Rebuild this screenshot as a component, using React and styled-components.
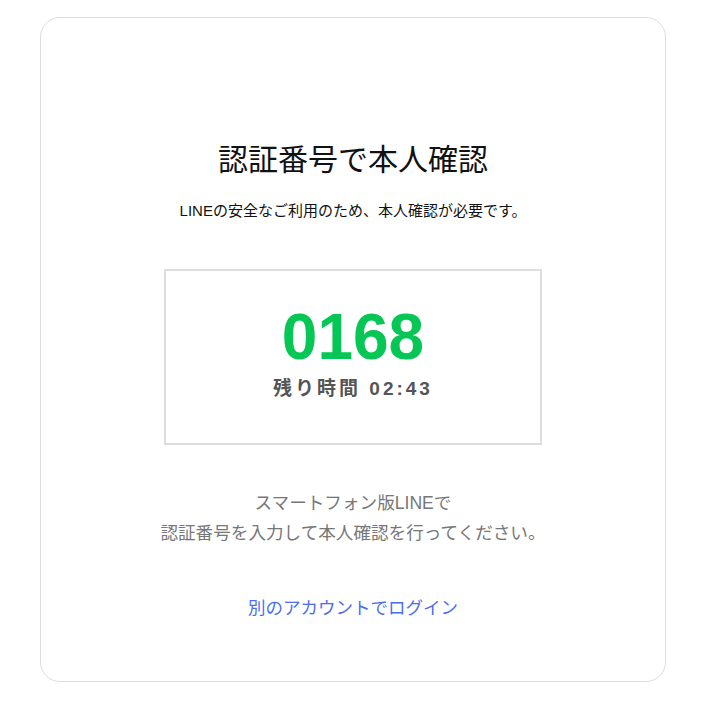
import React from 'react';
import styled, { createGlobalStyle } from 'styled-components';

const GlobalStyle = createGlobalStyle`
  html, body {
    margin: 0;
    padding: 0;
    background: #ffffff;
  }
  body {
    font-family: "Liberation Sans", "Noto Sans CJK JP", sans-serif;
    color: #111111;
  }
`;

const Page = styled.div`
  padding-top: 17px;
  padding-left: 40px;
`;

const Card = styled.div`
  box-sizing: border-box;
  width: 626px;
  height: 665px;
  border: 1px solid #dddddd;
  border-radius: 20px;
  padding-top: 122px;
  display: flex;
  flex-direction: column;
  align-items: center;
`;

const Title = styled.h1`
  margin: 0;
  font-size: 30px;
  line-height: 40px;
  font-weight: 400;
  color: #111111;
`;

const Subtitle = styled.p`
  margin: 20px 0 0;
  font-size: 15px;
  line-height: 22px;
  color: #111111;
`;

const CodeBox = styled.div`
  box-sizing: border-box;
  margin-top: 47px;
  width: 378px;
  height: 176px;
  border: 2px solid #dddddd;
  padding-top: 34px;
  display: flex;
  flex-direction: column;
  align-items: center;
`;

const Code = styled.div`
  font-family: "Liberation Sans", Arial, sans-serif;
  font-size: 64px;
  line-height: 64px;
  font-weight: 700;
  color: #06c755;
`;

const Timer = styled.div`
  margin-top: 8px;
  font-size: 19px;
  line-height: 24px;
  font-weight: 700;
  letter-spacing: 3px;
  color: #555555;
`;

const Guide = styled.p`
  margin: 43px 0 0;
  font-size: 17.6px;
  line-height: 30px;
  text-align: center;
  color: #777777;
`;

const OtherLink = styled.a`
  margin-top: 45px;
  font-size: 17.5px;
  line-height: 30px;
  color: #4b6ef0;
  text-decoration: none;
  cursor: pointer;
`;

export default function App() {
  return (
    <>
      <GlobalStyle />
      <Page>
        <Card>
          <Title>認証番号で本人確認</Title>
          <Subtitle>LINEの安全なご利用のため、本人確認が必要です。</Subtitle>
          <CodeBox>
            <Code>0168</Code>
            <Timer>残り時間 02:43</Timer>
          </CodeBox>
          <Guide>
            スマートフォン版LINEで
            <br />
            認証番号を入力して本人確認を行ってください。
          </Guide>
          <OtherLink href="#">別のアカウントでログイン</OtherLink>
        </Card>
      </Page>
    </>
  );
}
